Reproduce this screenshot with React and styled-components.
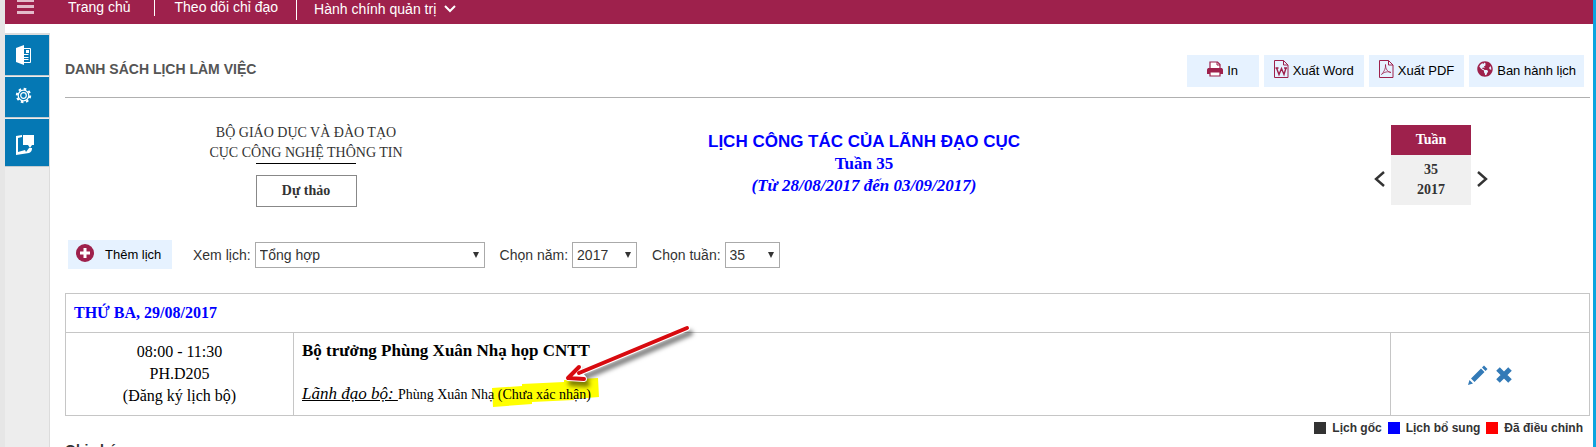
import React from 'react';
import styled, { createGlobalStyle } from 'styled-components';
import { FaGlobeAmericas } from 'react-icons/fa';

const sans = '"Liberation Sans", Arial, sans-serif';
const serif = '"Liberation Serif", "Times New Roman", serif';
const wine = '#9e214c';

const GlobalStyle = createGlobalStyle`
  * { box-sizing: border-box; }
  html, body, #root { height: 100%; }
  body { margin: 0; overflow: hidden; background: #fff; color: #333; font: 14px/20px ${sans}; }
  button, select { font: inherit; color: inherit; }
  button { border: 0; background: none; padding: 0; cursor: pointer; }
  a { color: inherit; text-decoration: none; }
`;

const Page = styled.div`
  display: flex;
  flex-direction: column;
  min-height: 100%;
  border-left: 5px solid #e6e6e6;
  border-right: 3px solid #0ca5df;
`;

const NavBar = styled.nav`
  display: flex;
  height: 24px;
  background: ${wine};
  color: #fff;
`;

const MenuButton = styled.button`
  width: 40px;
  height: 24px;
  padding-bottom: 10px;
  line-height: 0;
`;

const NavLink = styled.a`
  height: ${(p) => (p.$menu ? 20 : 16)}px;
  padding: ${(p) => p.$padding};
  line-height: ${(p) => (p.$menu ? 18 : 14)}px;
  border-left: ${(p) => (p.$divided ? '1px solid #fff' : '0')};
  svg { margin-left: 8px; vertical-align: 1px; }
`;

const Body = styled.div`
  display: flex;
  flex: 1;
  padding-top: 9px;
`;

const SideBar = styled.aside`
  display: flex;
  flex-direction: column;
  gap: 2px;
  width: 45px;
  flex: none;
  background: #ededed;
  border-top: 2px solid #dcdcdc;
  border-right: 1px solid #dcdcdc;
`;

const SideButton = styled.button`
  display: flex;
  align-items: center;
  height: ${(p) => p.$height || 40}px;
  padding: ${(p) => p.$padding || '0 0 0 10px'};
  background: #0578b4;
  box-shadow: 0 1px 0 #c4ccd0;
  color: #fff;
`;

const Main = styled.main`
  flex: 1;
  min-width: 0;
  padding: 22px 3px 0 15px;
`;

const TitleBar = styled.header`
  display: flex;
  align-items: flex-start;
  justify-content: space-between;
  height: 43px;
  padding-right: 6px;
  border-bottom: 1px solid #b0b0b0;
`;

const Title = styled.h1`
  margin: 4px 0 0;
  font-size: 14px;
  line-height: 20px;
  color: #555;
`;

const Actions = styled.div`
  display: flex;
  gap: 5px;
`;

const ActionButton = styled.button`
  display: flex;
  align-items: center;
  justify-content: center;
  gap: 4px;
  height: 32px;
  min-width: 72px;
  padding: 0 ${(p) => (p.$wide ? 10 : 8)}px;
  background: #e6f2ff;
  color: #000;
  font-size: 13px;
  svg { flex: none; margin-bottom: 4px; color: ${wine}; }
`;

const Heading = styled.section`
  display: grid;
  grid-template-columns: 482fr 634fr 409fr;
  padding-top: 25px;
  font-family: ${serif};
  text-align: center;
`;

const Office = styled.div`
  display: flex;
  flex-direction: column;
  align-items: center;
`;

const Rule = styled.hr`
  width: 100px;
  margin: 0;
  border: 0;
  border-top: 1px solid #000;
`;

const Draft = styled.div`
  width: 101px;
  margin-top: 11px;
  border: 1px solid #888;
  font-weight: bold;
  line-height: 30px;
`;

const Plan = styled.div`
  padding-top: 8px;
  color: #00f;
  font-size: 17px;
  font-weight: bold;
  line-height: 22px;
`;

const PlanTitle = styled.h2`
  margin: 0;
  font: bold 17px/22px ${sans};
`;

const Weeks = styled.div`
  display: flex;
  justify-content: flex-end;
  gap: 6px;
  padding: 2px 102px 0 0;
`;

const Step = styled.button`
  align-self: flex-start;
  margin-top: 46px;
  line-height: 0;
`;

const WeekCard = styled.div`
  width: 80px;
  font-weight: bold;
`;

const WeekHead = styled.div`
  background: ${wine};
  color: #fff;
  line-height: 30px;
`;

const WeekBody = styled.div`
  padding: 5px 0;
  background: #f0f0f0;
`;

const Filters = styled.form`
  display: flex;
  align-items: center;
  padding: 33px 0 24px 3px;
`;

const AddButton = styled.button`
  display: flex;
  align-items: center;
  gap: 11px;
  width: 104px;
  height: 29px;
  padding-left: 8px;
  background: #e6f2ff;
  color: #000;
  font-size: 13px;
  svg { margin-bottom: 4px; }
`;

const Field = styled.label`
  margin-left: ${(p) => p.$gap}px;
  margin-right: 4px;
`;

const SelectBox = styled.span`
  display: grid;
  align-items: center;
  width: ${(p) => p.$width}px;
  > * { grid-area: 1 / 1; }
  svg { justify-self: end; margin-right: 6px; pointer-events: none; }
`;

const Select = styled.select`
  width: 100%;
  height: 26px;
  padding: 0 4px;
  border: 1px solid #aaa;
  border-radius: 0;
  background: #fff;
  appearance: none;
`;

const Table = styled.table`
  width: 100%;
  table-layout: fixed;
  border-collapse: collapse;
  color: #000;
  font: 16px/22px ${serif};
`;

const Day = styled.th`
  height: 39px;
  padding: 0 8px;
  border: 1px solid #c6c6c6;
  color: #00f;
  text-align: left;
`;

const Cell = styled.td`
  height: 83px;
  padding: 8px;
  border: 1px solid #c6c6c6;
  text-align: ${(p) => p.$align || 'left'};
  vertical-align: ${(p) => p.$valign || 'top'};
`;

const Topic = styled.div`
  font-size: 17px;
  font-weight: bold;
  line-height: 20px;
`;

const Leader = styled.div`
  position: relative;
  z-index: 0;
  margin-top: 22px;
  font-size: 17px;
  i { text-decoration: underline; }
`;

const Person = styled.span`
  font-size: 14px;
`;

const Status = styled.mark`
  position: relative;
  background: none;
  color: inherit;
`;

const Marker = styled.svg`
  position: absolute;
  z-index: -1;
  left: -6px;
  top: -9px;
`;

const Arrow = styled.svg`
  position: absolute;
  left: 57px;
  top: -72px;
  overflow: visible;
  pointer-events: none;
  filter: drop-shadow(3px 5px 2px rgba(0, 0, 0, 0.5));
`;

const IconButton = styled.button`
  margin: 0 4px;
  line-height: 0;
  vertical-align: middle;
`;

const Legend = styled.ul`
  display: flex;
  justify-content: flex-end;
  gap: 6px;
  margin: 0;
  padding: 2px 7px 0 0;
  list-style: none;
  font-size: 12px;
  font-weight: bold;
`;

const LegendItem = styled.li`
  display: flex;
  align-items: center;
  gap: 6px;
  &::before {
    content: '';
    width: 12px;
    height: 12px;
    background: ${(p) => p.$color};
  }
`;

const Notes = styled.h3`
  margin: 2px 0 0;
  font-size: 14px;
  line-height: 20px;
`;

const FileIcon = ({ children }) => (
  <svg width="15" height="18" viewBox="0 0 15 18" fill="none" stroke="currentColor">
    <path d="M.5 .5H9.500L14 5V17.500H.5ZM9.500 .5V5H14" />
    {children}
  </svg>
);

const PrinterIcon = () => (
  <svg width="16" height="16" viewBox="0 0 16 16" fill="currentColor">
    <path d="M3 8V1H10.500L13 3.500V8" fill="#fff" stroke="currentColor" strokeWidth="1.200" />
    <path d="M10 1V4H13" fill="none" stroke="currentColor" />
    <path d="M0 9C0 7.500 1 7 2 7H14C15 7 16 7.500 16 9V13H0Z" />
    <path d="M3 11H13V15H3Z" fill="#fff" stroke="currentColor" strokeWidth="1.200" />
  </svg>
);

const Picker = ({ id, label, value, gap, width }) => (
  <>
    <Field htmlFor={id} $gap={gap}>{label}</Field>
    <SelectBox $width={width}>
      <Select id={id} defaultValue={value}><option>{value}</option></Select>
      <svg width="6" height="7" viewBox="0 0 6 7"><path d="M0 1H6L3 7Z" fill="#333" /></svg>
    </SelectBox>
  </>
);

export default function App() {
  return (
    <Page>
      <GlobalStyle />
      <NavBar>
        <MenuButton aria-label="Menu">
          <svg width="17" height="14" viewBox="0 0 17 14" fill="#e3bccb">
            <path d="M0 0H17V2H0ZM0 5H17V8H0ZM0 11H17V14H0Z" />
          </svg>
        </MenuButton>
        <NavLink href="#home" $padding="0 23px 0 23px">Trang chủ</NavLink>
        <NavLink href="#follow" $divided $padding="0 18px 0 20px">Theo dõi chỉ đạo</NavLink>
        <NavLink href="#admin" $divided $menu $padding="0 17px">
          Hành chính quản trị
          <svg width="12" height="8" viewBox="0 0 12 8" fill="none" stroke="#fff" strokeWidth="2">
            <path d="M1 1L6 6L11 1" />
          </svg>
        </NavLink>
      </NavBar>
      <Body>
        <SideBar>
          <SideButton aria-label="Văn bản">
            <svg width="17" height="20" viewBox="0 0 17 20">
              <path d="M1 3L9 0V20L1 17Z" fill="#fff" />
              <path d="M9 3.500H15.500V17.500H9M9 14.500H13.500M9 12.500H13.500M9 9.500H13.500" fill="none" stroke="#fff" />
              <path d="M11 5H14V8H11Z" fill="#fff" />
            </svg>
          </SideButton>
          <SideButton aria-label="Cấu hình" $padding="0 0 4px 10px">
            <svg width="17" height="17" viewBox="0 0 17 17" fill="none" stroke="#fff">
              <circle cx="8.500" cy="8.500" r="6.700" strokeWidth="2" strokeDasharray="2.630 2.630" />
              <circle cx="8.500" cy="8.500" r="5.300" strokeWidth="1.200" />
              <circle cx="8.500" cy="8.500" r="2.800" strokeWidth="1.200" />
            </svg>
          </SideButton>
          <SideButton aria-label="Trao đổi" $height={47} $padding="4px 0 0 10px">
            <svg width="20" height="20" viewBox="0 0 20 20" fill="#fff">
              <path d="M1 1L7 0V2L3 3V17L10 15L11 17L14 13L17 13C17 16 16 17 14 18L1 20Z" />
              <path d="M8 0H19V10H17L15 13L13 10H8Z" />
            </svg>
          </SideButton>
        </SideBar>
        <Main>
          <TitleBar>
            <Title>DANH SÁCH LỊCH LÀM VIỆC</Title>
            <Actions>
              <ActionButton><PrinterIcon />In</ActionButton>
              <ActionButton $wide>
                <FileIcon><path d="M2.500 8L5 14.500L7.500 8.500L10 14.500L12 8M1.500 8H4.500M10 8H13" strokeWidth="1.400" /></FileIcon>
                Xuất Word
              </ActionButton>
              <ActionButton $wide>
                <FileIcon><path d="M2.500 14.500C5 12 7 8 6.500 4.500C6.500 9 8.500 12 12 12.500C9 11 5 12 2.500 14.500Z" strokeWidth=".8" /></FileIcon>
                Xuất PDF
              </ActionButton>
              <ActionButton><FaGlobeAmericas size={16} />Ban hành lịch</ActionButton>
            </Actions>
          </TitleBar>
          <Heading>
            <Office>
              <div>BỘ GIÁO DỤC VÀ ĐÀO TẠO</div>
              <div>CỤC CÔNG NGHỆ THÔNG TIN</div>
              <Rule />
              <Draft>Dự thảo</Draft>
            </Office>
            <Plan>
              <PlanTitle>LỊCH CÔNG TÁC CỦA LÃNH ĐẠO CỤC</PlanTitle>
              <div>Tuần 35</div>
              <em>(Từ 28/08/2017 đến 03/09/2017)</em>
            </Plan>
            <Weeks>
              <Step aria-label="Tuần trước">
                <svg width="11" height="16" viewBox="0 0 11 16" fill="none" stroke="#333" strokeWidth="2.400"><path d="M10 1L2 8L10 15" /></svg>
              </Step>
              <WeekCard>
                <WeekHead>Tuần</WeekHead>
                <WeekBody>35<br />2017</WeekBody>
              </WeekCard>
              <Step aria-label="Tuần sau">
                <svg width="11" height="16" viewBox="0 0 11 16" fill="none" stroke="#333" strokeWidth="2.400"><path d="M1 1L9 8L1 15" /></svg>
              </Step>
            </Weeks>
          </Heading>
          <Filters>
            <AddButton type="button">
              <svg width="18" height="18" viewBox="0 0 18 18">
                <circle cx="9" cy="9" r="9" fill={wine} />
                <path d="M9 4V14M4 9H14" stroke="#fff" strokeWidth="3" />
              </svg>
              Thêm lịch
            </AddButton>
            <Picker id="view" label="Xem lịch:" value="Tổng hợp" gap={21} width={230} />
            <Picker id="year" label="Chọn năm:" value="2017" gap={15} width={65} />
            <Picker id="week" label="Chọn tuần:" value="35" gap={15} width={55} />
          </Filters>
          <Table>
            <colgroup><col width="228" /><col /><col width="199" /></colgroup>
            <tbody>
              <tr><Day colSpan={3}>THỨ BA, 29/08/2017</Day></tr>
              <tr>
                <Cell $align="center">08:00 - 11:30<br />PH.D205<br />(Đăng ký lịch bộ)</Cell>
                <Cell>
                  <Topic>Bộ trưởng Phùng Xuân Nhạ họp CNTT</Topic>
                  <Leader>
                    <i>Lãnh đạo bộ: </i>
                    <Person>
                      Phùng Xuân Nhạ{' '}
                      <Status>
                        (Chưa xác nhận)
                        <Marker width="107" height="30" viewBox="0 0 107 30">
                          <path d="M0 10L30 8V6L72 4V2L106 0L107 19L82 21V22L40 24V26L1 29Z" fill="#ff0" />
                        </Marker>
                        <Arrow width="140" height="70" viewBox="0 0 140 70" strokeLinecap="round" strokeLinejoin="round">
                          <path d="M132 13L24 58M24 52L13 63L29 64L24 58Z" fill="#fff" stroke="#fff" strokeWidth="6" />
                          <path d="M132 13L24 58" stroke="#d80a0f" strokeWidth="4" />
                          <path d="M24 52L13 63L29 64" fill="none" stroke="#d80a0f" strokeWidth="4" />
                        </Arrow>
                      </Status>
                    </Person>
                  </Leader>
                </Cell>
                <Cell $align="center" $valign="middle">
                  <IconButton aria-label="Sửa">
                    <svg width="20" height="20" viewBox="0 0 20 20" fill="#337ab7"><path d="M0 20L1.500 15L5 18.500ZM3 13.500L13 3.500L16.500 7L6.500 17ZM14 2.500L16 .5L19.500 4L17.500 6Z" /></svg>
                  </IconButton>
                  <IconButton aria-label="Xóa">
                    <svg width="16" height="16" viewBox="0 0 16 16" stroke="#337ab7" strokeWidth="5"><path d="M2 2L14 14M14 2L2 14" /></svg>
                  </IconButton>
                </Cell>
              </tr>
            </tbody>
          </Table>
          <Legend>
            <LegendItem $color="#333">Lịch gốc</LegendItem>
            <LegendItem $color="#00f">Lịch bổ sung</LegendItem>
            <LegendItem $color="#f00">Đã điều chỉnh</LegendItem>
          </Legend>
          <Notes>Ghi chú</Notes>
        </Main>
      </Body>
    </Page>
  );
}
